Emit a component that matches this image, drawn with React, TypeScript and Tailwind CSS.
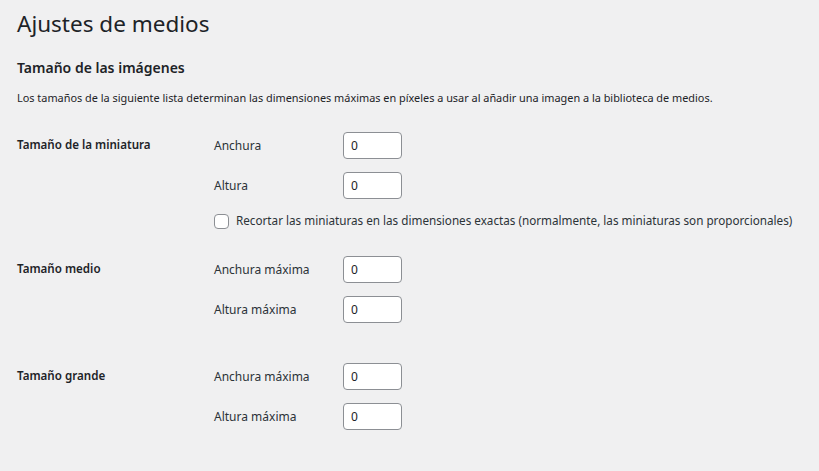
import React from 'react';

interface Field {
  label: string;
  value: string;
}

interface SizeRow {
  title: string;
  fields: Field[];
  crop?: string;
  gapAfter: string;
}

const rows: SizeRow[] = [
  {
    title: 'Tamaño de la miniatura',
    fields: [
      { label: 'Anchura', value: '0' },
      { label: 'Altura', value: '0' },
    ],
    crop: 'Recortar las miniaturas en las dimensiones exactas (normalmente, las miniaturas son proporcionales)',
    gapAfter: 'mb-[27px]',
  },
  {
    title: 'Tamaño medio',
    fields: [
      { label: 'Anchura máxima', value: '0' },
      { label: 'Altura máxima', value: '0' },
    ],
    gapAfter: 'mb-[40px]',
  },
  {
    title: 'Tamaño grande',
    fields: [
      { label: 'Anchura máxima', value: '0' },
      { label: 'Altura máxima', value: '0' },
    ],
    gapAfter: 'mb-0',
  },
];

export default function App() {
  return (
    <div className="min-h-screen bg-[#f0f0f1] text-[#1d2327] px-[17px] pt-[10px] font-['Noto_Sans',sans-serif]">
      <h1 className="text-[22.5px] font-normal leading-[28px]">Ajustes de medios</h1>

      <h2 className="mt-[20px] text-[14px] font-semibold leading-[20px]">
        Tamaño de las imágenes
      </h2>

      <p className="mt-[12px] text-[10.9px] leading-[16px]">
        Los tamaños de la siguiente lista determinan las dimensiones máximas en píxeles a usar al añadir una imagen a la biblioteca de medios.
      </p>

      <div className="mt-[26px]">
        {rows.map((row) => (
          <div key={row.title} className={`flex ${row.gapAfter}`}>
            <div className="w-[197px] shrink-0 pt-[4px] text-[11.6px] font-semibold leading-[17px]">
              {row.title}
            </div>

            <div className="flex flex-col gap-[13px]">
              {row.fields.map((f) => (
                <div key={f.label} className="flex items-center">
                  <span className="w-[129px] text-[12px] text-[#2c3338]">{f.label}</span>
                  <input
                    className="w-[59px] h-[27px] px-[7px] text-[12px] bg-white border border-[#8c8f94] rounded-[4px] outline-none"
                    defaultValue={f.value}
                  />
                </div>
              ))}

              {row.crop && (
                <label className="flex items-center gap-[7px] mt-[1px] h-[16px] whitespace-nowrap text-[11.7px] text-[#2c3338]">
                  <span className="w-[15px] h-[15px] shrink-0 bg-white border border-[#8c8f94] rounded-[4px]" />
                  {row.crop}
                </label>
              )}
            </div>
          </div>
        ))}
      </div>
    </div>
  );
}
